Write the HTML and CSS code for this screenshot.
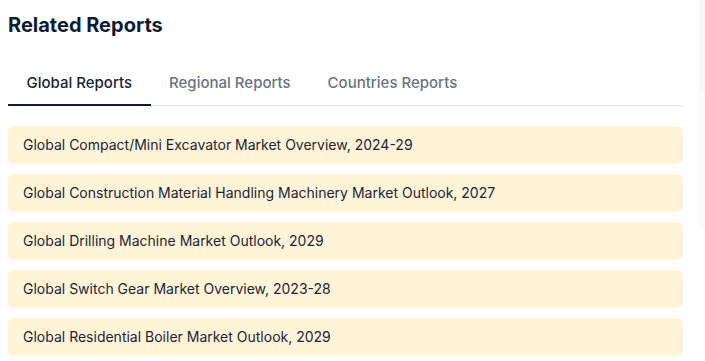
FILE: index.html
```html
<!DOCTYPE html>
<html lang="en">
<head>
    <meta charset="UTF-8">
    <title>Related Reports</title>
    <link rel="stylesheet" href="styles.css">
</head>
<body>
<div class="page">
    <div class="related">
        <h2 class="related-title">Related Reports</h2>
        <ul class="tabs">
            <li class="tab active">Global Reports</li>
            <li class="tab">Regional Reports</li>
            <li class="tab">Countries Reports</li>
        </ul>
        <ul class="report-list">
            <li><a href="#">Global Compact/Mini Excavator Market Overview, 2024-29</a></li>
            <li><a href="#">Global Construction Material Handling Machinery Market Outlook, 2027</a></li>
            <li><a href="#">Global Drilling Machine Market Outlook, 2029</a></li>
            <li><a href="#">Global Switch Gear Market Overview, 2023-28</a></li>
            <li><a href="#">Global Residential Boiler Market Outlook, 2029</a></li>
        </ul>
    </div>
    <div class="side"></div>
</div>
</body>
</html>
```

FILE: styles.css
```css
* {
    margin: 0;
    padding: 0;
    box-sizing: border-box;
}

ul, li {
    list-style: none;
}

a {
    text-decoration: none;
    color: #1b2436;
}

body {
    font-family: Inter, "Noto Sans", sans-serif;
    background: #fff;
    color: #1b2436;
}

.page {
    display: flex;
    gap: 15px;
    padding-left: 8px;
}

.related {
    width: 675px;
    padding-top: 12px;
}

.related-title {
    font-size: 20px;
    font-weight: 700;
    color: #0d1b36;
    line-height: 26px;
    margin-bottom: 22px;
}

.tabs {
    display: flex;
    border-bottom: 1px solid #e6e7ea;
    margin-bottom: 20px;
}

.tab {
    padding: 12px 18.5px 10px;
    font-size: 15px;
    font-weight: 500;
    line-height: 22px;
    color: #6b7380;
    margin-bottom: -1px;
    border-bottom: 2px solid transparent;
}

.tab.active {
    color: #1b2436;
    border-bottom-color: #0d1b36;
}

.report-list {
    display: flex;
    flex-direction: column;
    gap: 10px;
}

.report-list li {
    background: #fff4d8;
    border-radius: 6px;
}

.report-list a {
    display: block;
    padding: 9px 15px;
    font-size: 14px;
    line-height: 20px;
}

.side {
    flex: 1;
    height: 230px;
    background: linear-gradient(#f8f8f8 0, #f8f8f8 92px, #fcfcfc 92px);
}
```
